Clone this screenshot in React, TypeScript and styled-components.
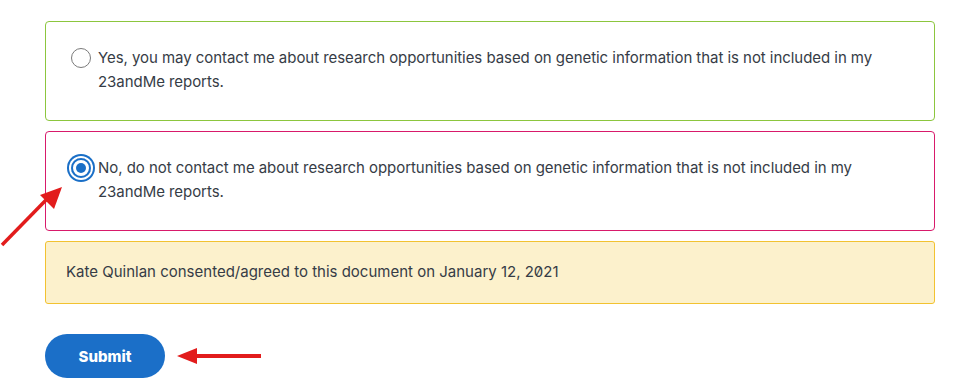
import React, { useState } from 'react';
import styled, { createGlobalStyle } from 'styled-components';

const GlobalStyle = createGlobalStyle`
  body {
    margin: 0;
    background: #ffffff;
    font-family: Inter, 'Noto Sans', sans-serif;
    font-feature-settings: 'zero' 1;
  }
`;

const Page = styled.div`
  position: relative;
  width: 890px;
  padding: 21px 0 0 45px;
`;

const Options = styled.div`
  display: flex;
  flex-direction: column;
  gap: 10px;
`;

const OptionCard = styled.label<{ $tone: 'green' | 'pink' }>`
  display: flex;
  align-items: flex-start;
  gap: 7px;
  padding: 24px 25px 26px;
  border: 1px solid ${(p) => (p.$tone === 'green' ? '#8cc63e' : '#d81a6b')};
  border-radius: 4px;
  cursor: pointer;
`;

const Radio = styled.span<{ $checked: boolean }>`
  flex: none;
  box-sizing: border-box;
  width: 20px;
  height: 20px;
  margin-top: 2px;
  border-radius: 50%;
  border: ${(p) => (p.$checked ? '2px solid #1a6fc7' : '1.5px solid #7a7a7a')};
  display: flex;
  align-items: center;
  justify-content: center;
  box-shadow: ${(p) => (p.$checked ? '0 0 0 2px #fff, 0 0 0 4px #1a6fc7' : 'none')};

  &::after {
    content: '';
    display: ${(p) => (p.$checked ? 'block' : 'none')};
    width: 10px;
    height: 10px;
    border-radius: 50%;
    background: #1a6fc7;
  }
`;

const OptionText = styled.span`
  font-size: 15px;
  letter-spacing: -0.05px;
  line-height: 24px;
  color: #363c46;
`;

const Notice = styled.div`
  margin-top: 10px;
  padding: 18px 20px 19px;
  background: #fcf1cc;
  border: 1px solid #f2c230;
  border-radius: 3px;
  font-size: 15px;
  line-height: 24px;
  color: #363c46;
`;

const Actions = styled.div`
  display: flex;
  align-items: center;
  gap: 12px;
  margin-top: 30px;
`;

const SubmitButton = styled.button`
  width: 120px;
  height: 44px;
  border: none;
  border-radius: 22px;
  background: #1b6fc8;
  color: #ffffff;
  font-family: Inter, 'Noto Sans', sans-serif;
  font-size: 15px;
  font-weight: 800;
  cursor: pointer;
`;

const PointerArrow = styled.svg`
  position: absolute;
  left: 0;
  top: 180px;
  pointer-events: none;
`;

const SideArrow = styled.svg`
  flex: none;
`;

const options = [
  {
    value: 'yes',
    tone: 'green' as const,
    label:
      'Yes, you may contact me about research opportunities based on genetic information that is not included in my 23andMe reports.',
  },
  {
    value: 'no',
    tone: 'pink' as const,
    label:
      'No, do not contact me about research opportunities based on genetic information that is not included in my 23andMe reports.',
  },
];

const App = () => {
  const [choice, setChoice] = useState('no');

  return (
    <>
      <GlobalStyle />
      <Page>
        <Options>
          {options.map((o) => (
            <OptionCard key={o.value} $tone={o.tone} onClick={() => setChoice(o.value)}>
              <Radio $checked={choice === o.value} />
              <OptionText>{o.label}</OptionText>
            </OptionCard>
          ))}
        </Options>
        <Notice>Kate Quinlan consented/agreed to this document on January 12, 2021</Notice>
        <Actions>
          <SubmitButton>Submit</SubmitButton>
          <SideArrow width="84" height="20" viewBox="0 0 84 20">
            <polygon points="0,10 20,2 20,18" fill="#e21c1c" />
            <rect x="18" y="8" width="66" height="4" fill="#e21c1c" />
          </SideArrow>
        </Actions>
        {/* arrow pointing at the selected radio */}
        <PointerArrow width="70" height="70" viewBox="0 0 70 70">
          <line x1="2" y1="65" x2="46" y2="20" stroke="#e21c1c" strokeWidth="3.5" />
          <polygon points="62,7 40,15 54,29" fill="#e21c1c" />
        </PointerArrow>
      </Page>
    </>
  );
};

export default App;
